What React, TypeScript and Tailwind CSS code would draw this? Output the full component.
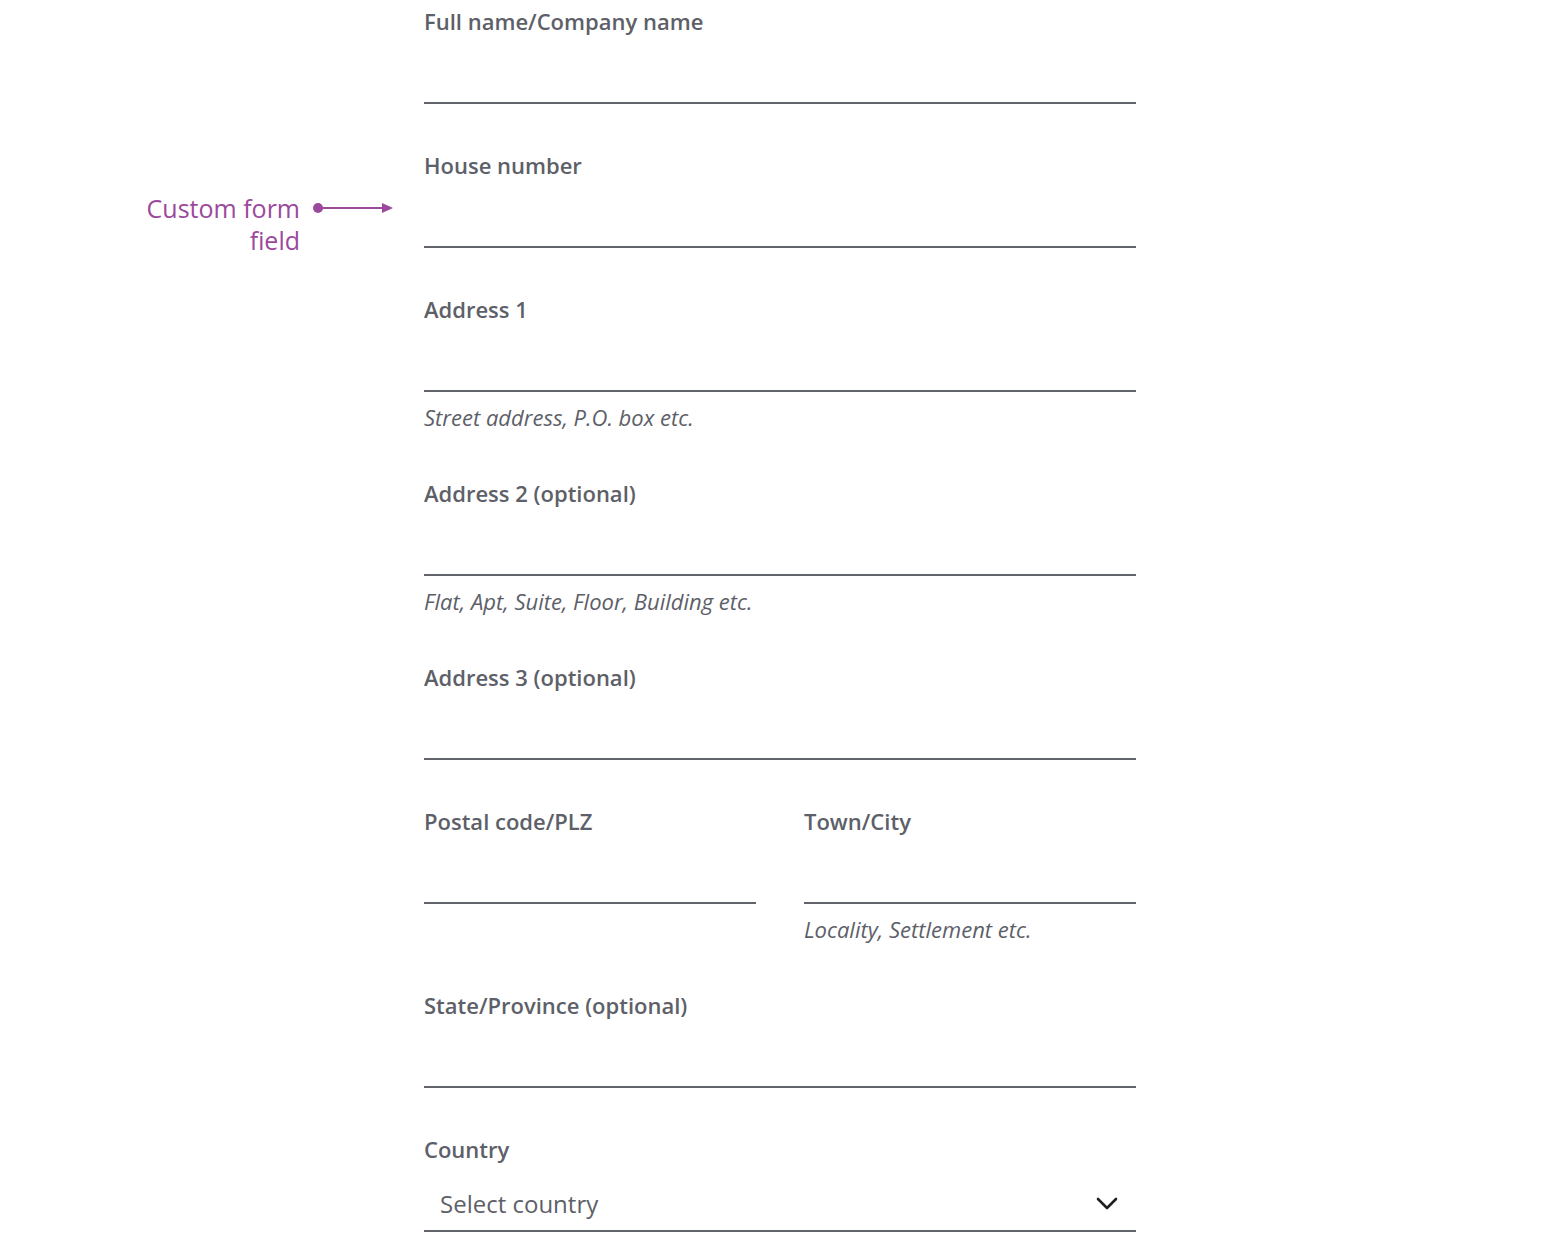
// Address form with annotation for custom field
type Field = {
  label: string;
  hint?: string;
};

const font = { fontFamily: '"Open Sans", "Noto Sans", sans-serif' };

function TextField({ label, hint }: Field) {
  return (
    <div className="mb-12 flex flex-col">
      <label className="h-7 text-[22px] font-semibold leading-[26px] text-[#5d6068]">{label}</label>
      <div className="h-[68px] border-b-2 border-[#62646b]" />
      {hint && <div className="mt-3 h-7 text-[22px] italic leading-[26px] text-[#5d6068]">{hint}</div>}
    </div>
  );
}

function Annotation() {
  return (
    <div className="absolute right-full top-[192px] mr-[30px] flex items-start">
      <div className="w-[220px] text-right text-[25px] leading-8 text-[#9a499c]">
        Custom form
        <br />
        field
      </div>
      <svg width="82" height="14" viewBox="0 0 82 14" className="ml-[12px] mt-[9px]">
        <circle cx="6" cy="7" r="5" fill="#9a499c" />
        <line x1="6" y1="7" x2="74" y2="7" stroke="#9a499c" strokeWidth="2" />
        <polygon points="70,2 81,7 70,12" fill="#9a499c" />
      </svg>
    </div>
  );
}

export default function App() {
  return (
    <div className="min-h-[1240px] bg-white" style={font}>
      <div className="relative ml-[424px] w-[712px] pt-2">
        <Annotation />
        <TextField label="Full name/Company name" />
        <TextField label="House number" />
        <TextField label="Address 1" hint="Street address, P.O. box etc." />
        <TextField label="Address 2 (optional)" hint="Flat, Apt, Suite, Floor, Building etc." />
        <TextField label="Address 3 (optional)" />
        <div className="grid grid-cols-2 gap-x-12">
          <TextField label="Postal code/PLZ" />
          <TextField label="Town/City" hint="Locality, Settlement etc." />
        </div>
        <TextField label="State/Province (optional)" />
        <div className="flex flex-col">
          <label className="h-7 text-[22px] font-semibold leading-[26px] text-[#5d6068]">Country</label>
          <div className="mt-[14px] flex h-[54px] items-center justify-between border-b-2 border-[#62646b] pl-4 pr-[18px]">
            <span className="text-[24px] text-[#5d6068]">Select country</span>
            <svg width="22" height="14" viewBox="0 0 22 14" fill="none">
              <path d="M2 2l9 9 9-9" stroke="#1f1f22" strokeWidth="2.6" strokeLinecap="round" strokeLinejoin="round" />
            </svg>
          </div>
        </div>
      </div>
    </div>
  );
}
